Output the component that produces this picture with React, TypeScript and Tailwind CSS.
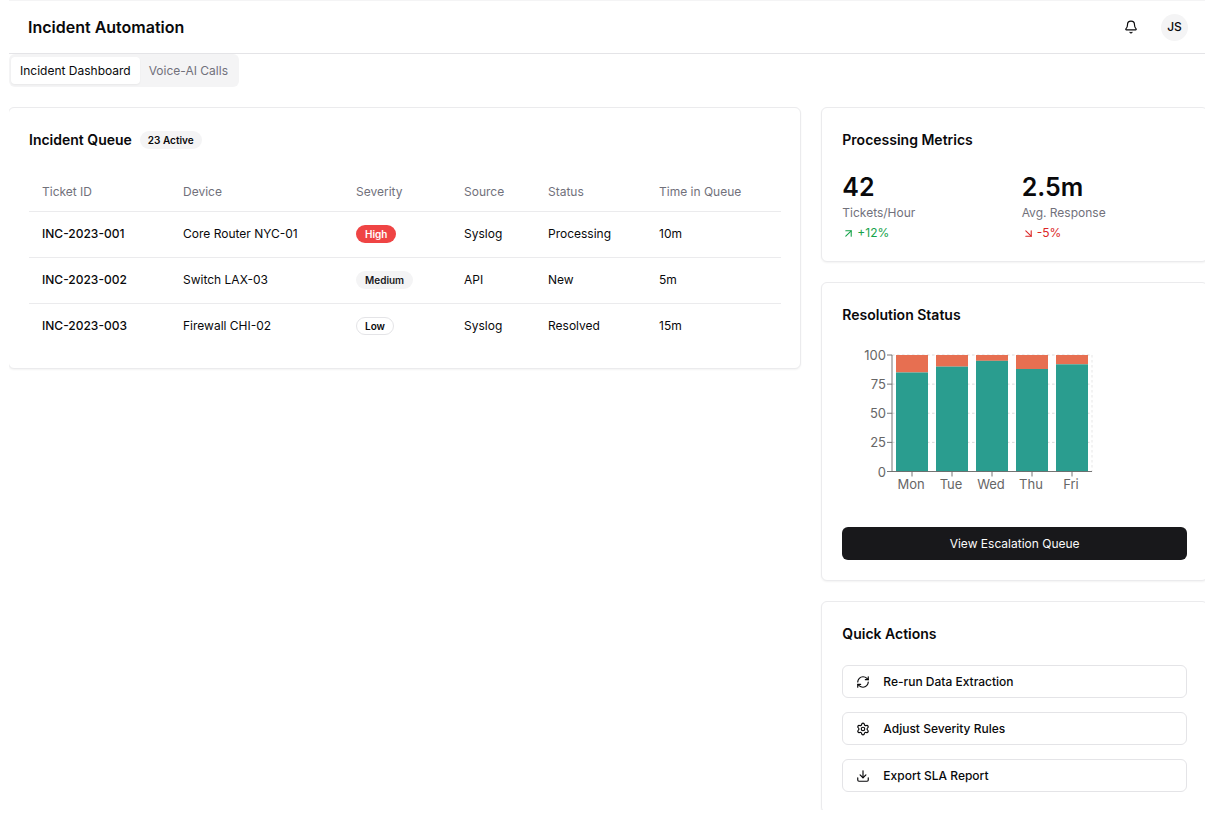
import React, { useState } from 'react';
import { ArrowDownRight, ArrowUpRight, Bell, Download, RefreshCw, Settings } from 'lucide-react';

const incidents = [
  { id: 'INC-2023-001', device: 'Core Router NYC-01', severity: 'High', source: 'Syslog', status: 'Processing', time: '10m' },
  { id: 'INC-2023-002', device: 'Switch LAX-03', severity: 'Medium', source: 'API', status: 'New', time: '5m' },
  { id: 'INC-2023-003', device: 'Firewall CHI-02', severity: 'Low', source: 'Syslog', status: 'Resolved', time: '15m' },
];

const resolution = [
  { day: 'Mon', auto: 85 },
  { day: 'Tue', auto: 90 },
  { day: 'Wed', auto: 95 },
  { day: 'Thu', auto: 88 },
  { day: 'Fri', auto: 92 },
];

const severityStyles: Record<string, string> = {
  High: 'bg-[#ef4444] border-transparent text-white',
  Medium: 'bg-zinc-100 border-transparent text-zinc-900',
  Low: 'border-zinc-200 text-zinc-950',
};

export default function App() {
  const [tab, setTab] = useState('dashboard');

  return (
    <div className="min-h-screen bg-white pb-[9px] pl-[9px] pr-3 font-['Inter','Liberation_Sans',sans-serif] text-xs text-zinc-950">
      <div className="overflow-hidden">
        <Header />

        {/* Tabs */}
        <div role="tablist" className="inline-flex h-[33px] items-center rounded-md bg-zinc-100 px-0.5">
          <Tab label="Incident Dashboard" active={tab === 'dashboard'} onClick={() => setTab('dashboard')} />
          <Tab label="Voice-AI Calls" active={tab === 'calls'} onClick={() => setTab('calls')} />
        </div>

        <main className="-ml-px -mr-[3px] -mb-[3px] mt-5 grid grid-cols-3 items-start gap-5">
          <div className="col-span-2">
            <IncidentQueue />
          </div>
          <div className="flex flex-col gap-5">
            <ProcessingMetrics />
            <ResolutionStatus />
            <QuickActions />
          </div>
        </main>
      </div>
    </div>
  );
}

function Header() {
  return (
    <header className="flex h-[54px] items-center justify-between border-y border-t-zinc-100 border-b-zinc-200 pl-[19px] pr-[17px]">
      <h1 className="text-base font-semibold">Incident Automation</h1>
      <div className="flex items-center gap-3.5">
        <button aria-label="Notifications" className="flex size-8 items-center justify-center rounded-md">
          <Bell className="size-3.5" />
        </button>
        <button className="flex size-[27px] items-center justify-center rounded-full bg-zinc-100 font-medium">JS</button>
      </div>
    </header>
  );
}

function Tab({ label, active, onClick }: { label: string; active: boolean; onClick: () => void }) {
  return (
    <button
      role="tab"
      aria-selected={active}
      onClick={onClick}
      className={`h-[27px] rounded-sm px-[9px] ${active ? 'bg-white text-zinc-950 shadow-xs' : 'text-zinc-500'}`}
    >
      {label}
    </button>
  );
}

function Card({ children }: { children: React.ReactNode }) {
  return <section className="rounded-md border border-[#ebebed] bg-white p-5 shadow-xs">{children}</section>;
}

function CardTitle({ children }: { children: React.ReactNode }) {
  return <h2 className="text-sm leading-[23px] font-semibold">{children}</h2>;
}

function IncidentQueue() {
  return (
    <Card>
      <div className="flex items-center gap-2">
        <CardTitle>Incident Queue</CardTitle>
        <span className="rounded-full bg-zinc-100 px-2 text-[10px] leading-[18px] font-semibold">23 Active</span>
      </div>
      <table className="mt-5 w-full table-fixed text-left">
        <colgroup>
          <col className="w-[141px]" />
          <col className="w-[173px]" />
          <col className="w-[108px]" />
          <col className="w-[84px]" />
          <col className="w-[111px]" />
          <col className="w-[135px]" />
        </colgroup>
        <thead>
          <tr className="h-10 border-b border-[#ebebed] text-zinc-500">
            {['Ticket ID', 'Device', 'Severity', 'Source', 'Status', 'Time in Queue'].map((name) => (
              <th key={name} className="px-[13px] pt-0.5 font-normal">{name}</th>
            ))}
          </tr>
        </thead>
        <tbody>
          {incidents.map((item) => (
            <tr key={item.id} className="h-[46px] border-b border-[#ebebed] last:h-[45px] last:border-0">
              <td className="px-[13px] font-medium">{item.id}</td>
              <td className="px-[13px]">{item.device}</td>
              <td className="px-[13px]">
                <span className={`inline-block rounded-full border px-2 text-[10px] leading-4 font-semibold ${severityStyles[item.severity]}`}>
                  {item.severity}
                </span>
              </td>
              <td className="px-[13px]">{item.source}</td>
              <td className="px-[13px]">{item.status}</td>
              <td className="px-[13px]">{item.time}</td>
            </tr>
          ))}
        </tbody>
      </table>
    </Card>
  );
}

function ProcessingMetrics() {
  return (
    <Card>
      <CardTitle>Processing Metrics</CardTitle>
      <div className="mt-5 grid grid-cols-2 gap-3.5">
        <div>
          <div className="text-[25px] leading-8 font-semibold">42</div>
          <div className="mt-0.5 leading-4 text-zinc-500">Tickets/Hour</div>
          <div className="mt-1 flex items-center gap-0.5 leading-4 text-[#16a34a]">
            <ArrowUpRight className="size-[13px]" />
            +12%
          </div>
        </div>
        <div>
          <div className="text-[25px] leading-8 font-semibold">2.5m</div>
          <div className="mt-0.5 leading-4 text-zinc-500">Avg. Response</div>
          <div className="mt-1 flex items-center gap-0.5 leading-4 text-[#dc2626]">
            <ArrowDownRight className="size-[13px]" />
            -5%
          </div>
        </div>
      </div>
    </Card>
  );
}

function ResolutionStatus() {
  return (
    <Card>
      <CardTitle>Resolution Status</CardTitle>
      <ResolutionChart />
      <button className="mt-3.5 h-[33px] w-full rounded-md bg-zinc-900 text-zinc-50">View Escalation Queue</button>
    </Card>
  );
}

// Stacked bars: auto-resolved below, escalated on top
function ResolutionChart() {
  const left = 50;
  const top = 9;
  const bottom = 125.5;
  const y = (value: number) => bottom - ((bottom - top) * value) / 100;

  return (
    <svg width="260" height="167" className="mt-5 block text-[13px]">
      {[0, 25, 50, 75, 100].map((tick) => (
        <g key={tick}>
          <line x1={left} x2={left + 200} y1={y(tick)} y2={y(tick)} stroke="#ccc" strokeWidth="0.7" strokeDasharray="2.5 2.5" />
          <line x1={left - 5} x2={left} y1={y(tick)} y2={y(tick)} stroke="#666" strokeWidth="0.9" />
          <text x={left - 6} y={y(tick) + 5} textAnchor="end" fill="#666">{tick}</text>
        </g>
      ))}
      <line x1={left + 200} x2={left + 200} y1={top} y2={bottom} stroke="#ccc" strokeWidth="0.5" strokeDasharray="2.5 2.5" />
      {resolution.map((item, i) => (
        <g key={item.day}>
          <rect x={left + 4 + i * 40} y={top} width="32" height={y(item.auto) - top} fill="#e76f51" />
          <rect x={left + 4 + i * 40} y={y(item.auto)} width="32" height={bottom - y(item.auto)} fill="#2a9d8f" />
          <line x1={left + 20 + i * 40} x2={left + 20 + i * 40} y1={bottom} y2={bottom + 5} stroke="#666" strokeWidth="0.9" />
          <text x={left + 19 + i * 40} y={bottom + 17} textAnchor="middle" fill="#666">{item.day}</text>
        </g>
      ))}
      <line x1={left} x2={left} y1={top} y2={bottom} stroke="#666" strokeWidth="0.9" />
      <line x1={left} x2={left + 200} y1={bottom} y2={bottom} stroke="#666" strokeWidth="0.9" />
    </svg>
  );
}

function QuickActions() {
  return (
    <Card>
      <CardTitle>Quick Actions</CardTitle>
      <div className="mt-5 flex flex-col gap-3.5">
        <ActionButton icon={<RefreshCw className="size-3.5" />} label="Re-run Data Extraction" />
        <ActionButton icon={<Settings className="size-3.5" />} label="Adjust Severity Rules" />
        <ActionButton icon={<Download className="size-3.5" />} label="Export SLA Report" />
      </div>
    </Card>
  );
}

function ActionButton({ icon, label }: { icon: React.ReactNode; label: string }) {
  return (
    <button className="flex h-[33px] w-full items-center gap-[13px] rounded-md border border-zinc-200 px-[13px] font-medium">
      {icon}
      {label}
    </button>
  );
}
